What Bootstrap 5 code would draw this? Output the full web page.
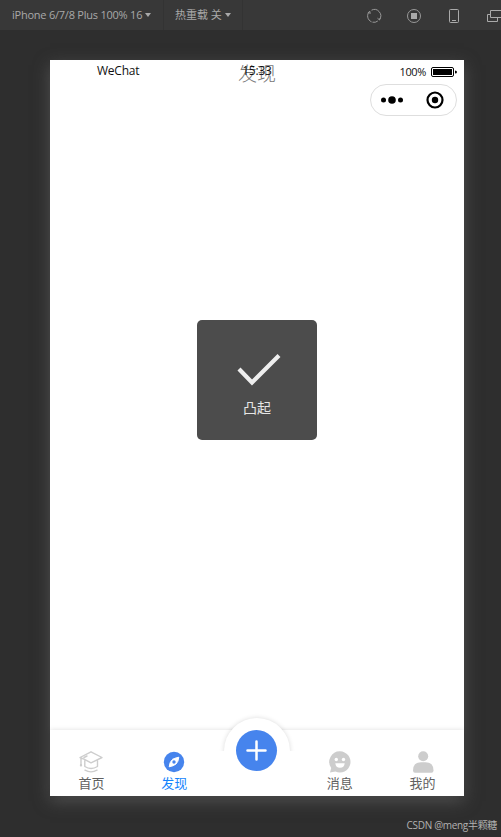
<!DOCTYPE html>
<html lang="zh-CN">
<head>
<meta charset="utf-8">
<meta name="viewport" content="width=device-width, initial-scale=1">
<title>发现</title>
<link href="https://cdn.jsdelivr.net/npm/bootstrap@5.3.0/dist/css/bootstrap.min.css" rel="stylesheet">
<style>
body{background:#2e2e2e;height:837px;overflow:hidden;font-family:"Open Sans","Noto Sans CJK SC",sans-serif}
svg{display:block;flex:none}
.toolbar{height:30px;background:#383838;color:#a9a9a9;font-size:11px;line-height:30px;white-space:nowrap}
.device-pick{width:164px;padding-left:12px;border-right:1px solid #333}
.reload-pick{width:79px;padding-left:11px;border-right:1px solid #333}
.device-pick,.reload-pick,.tools{flex:none}
.device-pick span{letter-spacing:-.23px}
.caret{width:0;border:3px solid transparent;border-top:4px solid #a9a9a9;border-bottom:0;margin-left:3px}
.tools{padding-left:123px;gap:24px}
.tools svg{margin-top:1px}
.phone{width:414px;height:736px;margin:30px 0 0 50px;background:#fff;box-shadow:0 5px 15px 0 #505050}
.status{height:24px;color:#111;font-size:12px;line-height:22px}
.carrier{left:47px;top:0;letter-spacing:-.25px}
.clock{left:0;right:0;top:0;text-align:center;letter-spacing:-.2px}
.page-title{left:0;right:0;top:0;text-align:center;font-size:19px;line-height:28px;color:#777;font-weight:300}
.power{right:7px;top:1px;font-size:11px;gap:5px}
.power span{letter-spacing:-.35px}
.capsule{width:87px;height:32px;border:1px solid #dedede;margin-right:7px;padding:0 12px 0 10px}
.toast-box{width:120px;height:120px;background:#4c4c4c;border-radius:5px;left:147px;top:260px;color:#e6e6e6;font-size:14px}
.toast-box svg{margin:33px 0 0 3px}
.toast-box span{line-height:20px;margin-top:12px}
.tabs{height:66px;background:#fff;box-shadow:0 0 5px rgba(0,0,0,.13);color:#606060;font-size:13px}
.tab{flex:1 1 0;padding-top:20px}
.tab span{line-height:18px}
.tab.current{color:#1684fc}
.bump{left:174px;top:-12px;width:66px;height:33px;overflow:visible}
.plus{left:186px;top:0}
.credit{right:4px;bottom:4px;font-size:10px;letter-spacing:-.32px;line-height:16px;color:#b2b2b2;white-space:nowrap}
</style>
<script src="https://cdn.jsdelivr.net/npm/bootstrap@5.3.0/dist/js/bootstrap.bundle.min.js"></script>
</head>
<body>
<header class="toolbar d-flex">
  <div class="device-pick d-flex align-items-center"><span>iPhone 6/7/8 Plus 100% 16</span><i class="caret"></i></div>
  <div class="reload-pick d-flex align-items-center"><span>热重载 关</span><i class="caret"></i></div>
  <div class="tools d-flex align-items-center">
    <svg width="16" height="16" viewBox="0 0 16 16" fill="none" stroke="#999"><path d="M5.500 13.800A6.300 6.300 0 0 1 3.500 3.500M5.500 2.200A6.300 6.300 0 0 1 13.500 11.500M1.800 4.800 4 3.500V6M14.500 9.500l-1 2.500-2-1.800M11.800 13A6.300 6.300 0 0 1 6.500 14.200"/></svg>
    <svg width="16" height="16" viewBox="0 0 16 16"><circle cx="8" cy="8" r="6.500" fill="none" stroke="#999"/><path d="M5 5h6v6H5z" fill="#aaa"/></svg>
    <svg width="16" height="16" viewBox="0 0 16 16" fill="none" stroke="#aaa"><rect x="3.500" y="1.500" width="9" height="13" rx="1"/><path d="M6 12.500h4"/></svg>
    <svg width="16" height="16" viewBox="0 0 16 16" fill="none" stroke="#aaa"><path d="M4.500 2.500h12v7h-12zM4.500 6.500h-3v7h10v-4"/></svg>
  </div>
</header>
<main class="phone position-relative d-flex flex-column">
  <div class="status position-relative">
    <span class="carrier position-absolute">WeChat</span>
    <span class="page-title position-absolute">发现</span>
    <span class="clock position-absolute">15:33</span>
    <div class="power position-absolute d-flex align-items-center"><span>100%</span>
      <svg width="26" height="10" viewBox="0 0 26 10"><rect x=".5" y=".5" width="22" height="9" rx="1.500" fill="#fff" stroke="#000"/><path d="M2 2h19v6H2zM24 3.500q2 0 2 1.500t-2 1.500z"/></svg>
    </div>
  </div>
  <div class="capsule rounded-pill d-flex align-items-center justify-content-between align-self-end">
    <svg width="22" height="10" viewBox="0 0 22 10"><circle cx="2.500" cy="5" r="2.500"/><circle cx="11" cy="5" r="3.800"/><circle cx="19.500" cy="5" r="2.500"/></svg>
    <svg width="18" height="18" viewBox="0 0 18 18"><circle cx="9" cy="9" r="7.500" fill="none" stroke="#000" stroke-width="2.200"/><circle cx="9" cy="9" r="3.200"/></svg>
  </div>
  <div class="toast-box position-absolute d-flex flex-column align-items-center">
    <svg width="46" height="33" viewBox="0 0 46 33"><path d="M3 16 16 29.500 43 2.500" fill="none" stroke="#eee" stroke-width="4.200"/></svg>
    <span>凸起</span>
  </div>
  <nav class="tabs position-relative d-flex mt-auto">
    <div class="tab d-flex flex-column align-items-center">
      <svg width="26" height="24" viewBox="0 0 26 24" fill="none" stroke="#cdcdcd" stroke-width="1.400" stroke-linejoin="round" stroke-linecap="round"><path d="M13 1.800 24 7.500 13 12.800 6.500 9.300 2 7.500zM6.800 10.500v6q6.200 4 12.700 0v-6M3 8v7.500M7 20.200q6 3.300 12 0M6 7.500l3-1.500"/><circle cx="3" cy="15.200" r=".5"/></svg>
      <span>首页</span>
    </div>
    <div class="tab current d-flex flex-column align-items-center">
      <svg width="24" height="24" viewBox="0 0 24 24"><circle cx="12" cy="12" r="10.200" fill="#4684ed"/><path d="M16.800 7.200Q16.300 12 14 14T7.200 16.800Q7.700 12 10 10T16.800 7.200z" fill="#fff" stroke="#fff" stroke-linejoin="round"/><circle cx="12" cy="12" r="1.700" fill="#4684ed"/></svg>
      <span>发现</span>
    </div>
    <div class="tab"></div>
    <div class="tab d-flex flex-column align-items-center">
      <svg width="24" height="24" viewBox="0 0 24 24"><path d="M12 1.300a10.600 10.600 0 1 1-4.600 20.200L2 22.500 3.200 18A10.600 10.600 0 0 1 12 1.300z" fill="#cdcdcd"/><g fill="#fff"><circle cx="8.300" cy="9.500" r="1.700"/><circle cx="15.500" cy="9.500" r="1.700"/><path d="M7.300 13.300h9.400q-.5 4.500-4.700 4.500t-4.700-4.500z"/></g></svg>
      <span>消息</span>
    </div>
    <div class="tab d-flex flex-column align-items-center">
      <svg width="24" height="24" viewBox="0 0 24 24" fill="#cdcdcd"><circle cx="12.200" cy="6.300" r="5"/><path d="M2 20.500Q2 12.300 10 12.300h4.500q8 0 8 8.200 0 2.200-2 2.200H4q-2 0-2-2.200z"/></svg>
      <span>我的</span>
    </div>
    <svg class="bump position-absolute" viewBox="0 0 66 33"><defs><filter id="halo" x="-20%" y="-30%" width="140%" height="160%"><feGaussianBlur stdDeviation="2.500"/></filter><clipPath id="upper"><path d="M-10-10h86v43h-86z"/></clipPath></defs><g clip-path="url(#upper)"><circle cx="33" cy="33" r="33" fill="#000" opacity=".14" filter="url(#halo)"/><circle cx="33" cy="33" r="33" fill="#fff"/></g></svg>
    <svg class="plus position-absolute" width="42" height="42" viewBox="0 0 42 42"><circle cx="20.500" cy="20.500" r="20.500" fill="#4684ed"/><path d="M20.500 11.500v18M11.500 20.500h18" stroke="#fff" stroke-width="2.500" stroke-linecap="round"/></svg>
  </nav>
</main>
<div class="credit position-absolute">CSDN @meng半颗糖</div>
</body>
</html>
